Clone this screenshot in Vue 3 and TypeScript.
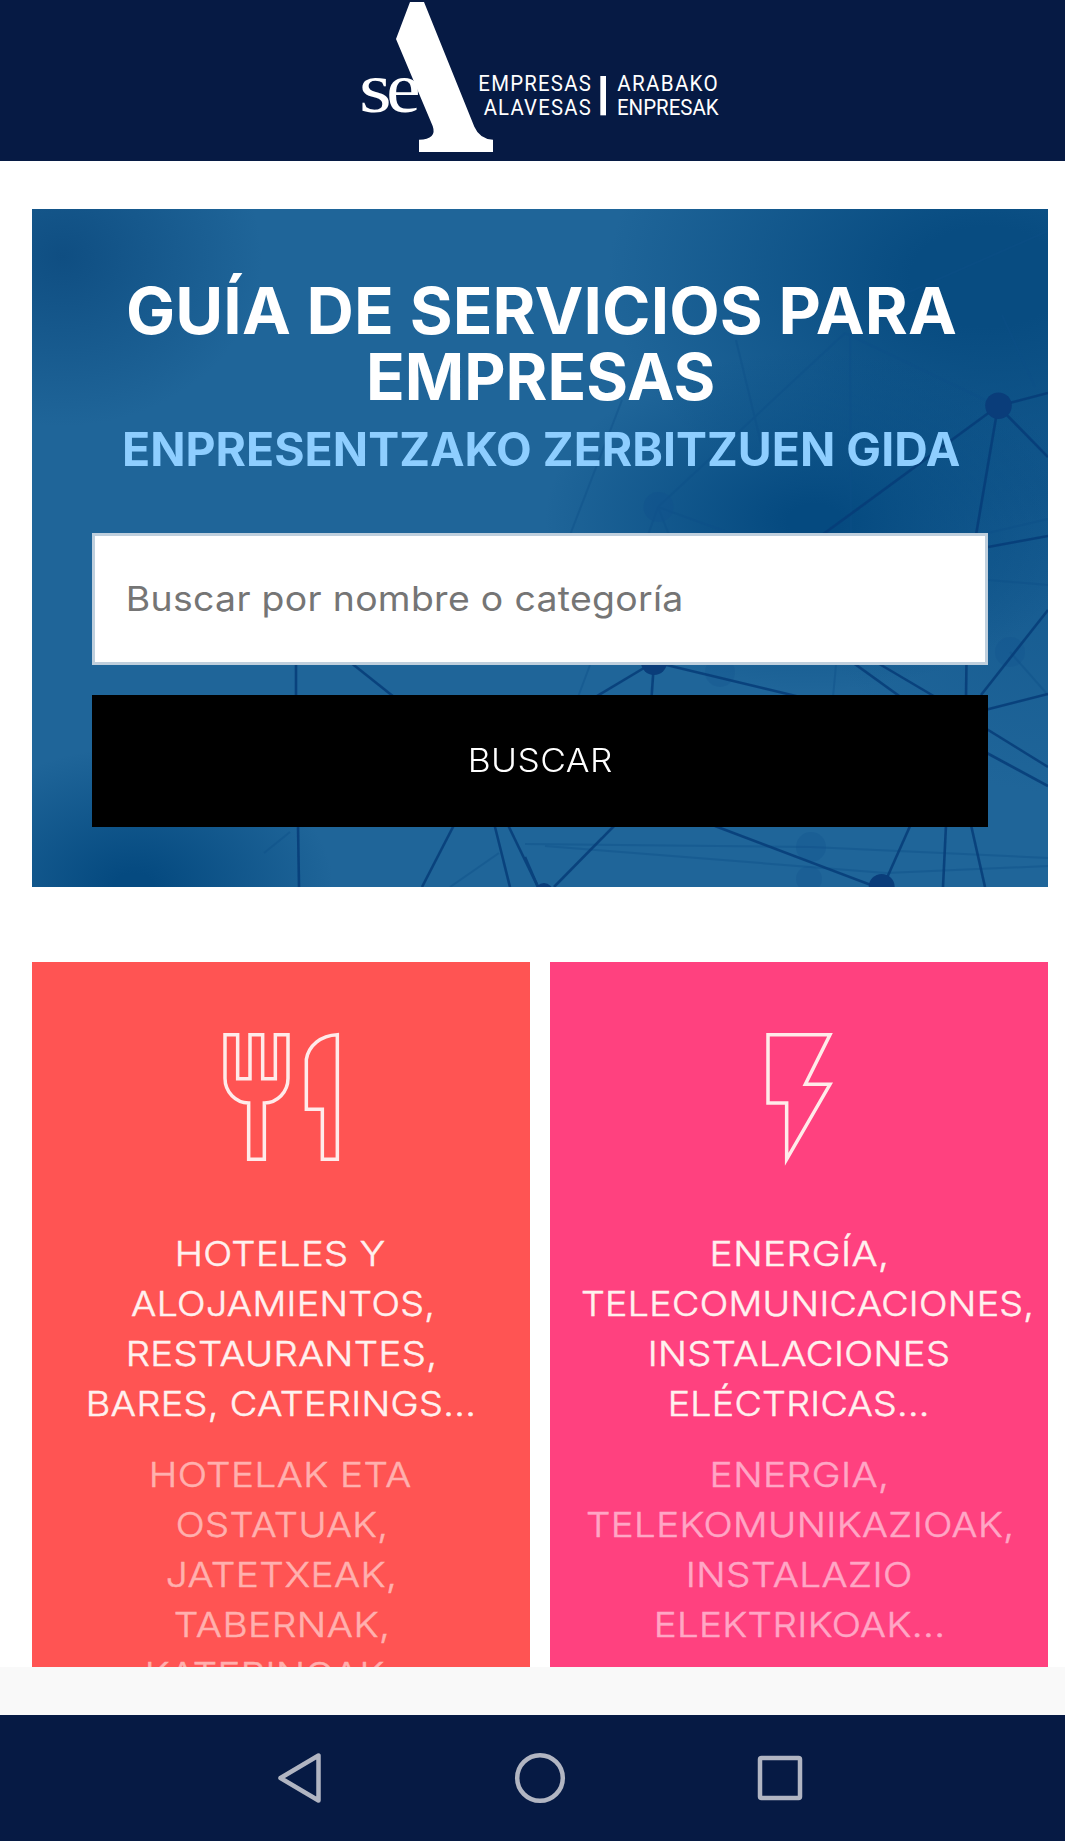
<script setup lang="ts">
interface Line {
  text: string
  width: number
}
interface Card {
  id: string
  spanish: Line[]
  basque: Line[]
}

const line = (text: string, width: number): Line => ({ text, width })

const title: Line[] = [line('GUÍA DE SERVICIOS PARA', 828), line('EMPRESAS', 343.5)]
const subtitle = line('ENPRESENTZAKO ZERBITZUEN GIDA', 835)
const placeholder = line('Buscar por nombre o categoría', 553)
const submit = line('BUSCAR', 141)

const cards: Card[] = [
  {
    id: 'food',
    spanish: [
      line('HOTELES Y', 206),
      line('ALOJAMIENTOS,', 301),
      line('RESTAURANTES,', 305),
      line('BARES, CATERINGS...', 384),
    ],
    basque: [
      line('HOTELAK ETA', 259),
      line('OSTATUAK,', 207),
      line('JATETXEAK,', 226),
      line('TABERNAK,', 212),
      line('KATERINGAK...', 267),
    ],
  },
  {
    id: 'energy',
    spanish: [
      line('ENERGÍA,', 173),
      line('TELECOMUNICACIONES,', 449),
      line('INSTALACIONES', 297),
      line('ELÉCTRICAS...', 255.5),
    ],
    basque: [
      line('ENERGIA,', 173),
      line('TELEKOMUNIKAZIOAK,', 424),
      line('INSTALAZIO', 221),
      line('ELEKTRIKOAK...', 285),
    ],
  },
]

// Widens a line of text to the given width, mostly through wider letters
// and for the rest through tracking.
const vFit = {
  mounted(el: HTMLElement, binding: { value: number }) {
    const text = (el.textContent ?? '').trim()
    const style = getComputedStyle(el)
    const ctx = document.createElement('canvas').getContext('2d')
    if (!ctx || text.length < 2) return
    ctx.font = `${style.fontWeight} ${style.fontSize} ${style.fontFamily}`
    const m = ctx.measureText(text)
    const ink = m.actualBoundingBoxLeft + m.actualBoundingBoxRight
    const scale = 1 + (binding.value / ink - 1) * 0.85
    const spacing = (binding.value / scale - ink) / (text.length - 1)
    el.style.letterSpacing = `${spacing}px`
    el.style.width = `${binding.value}px`
    el.style.transform = `scaleX(${scale}) translateX(${m.actualBoundingBoxLeft}px)`
  },
}

const strong: number[][] = [
  [998, 406, 1048, 393], [998, 406, 1048, 457], [998, 406, 976, 535], [998, 406, 822, 535],
  [988, 547, 1048, 536], [1048, 610, 981, 695], [966.5, 660, 966, 698], [1048, 694, 985, 710],
  [985, 728, 1048, 767], [985, 752, 1048, 786], [852, 662, 902, 698], [876, 662, 937, 698],
  [654, 662, 597, 696], [654, 662, 651.5, 698], [654, 662, 800, 697], [715, 826, 871, 885],
  [910.5, 825, 886, 880], [946, 825, 943, 887], [971, 825, 985, 887], [615, 825, 554, 887],
  [525, 857, 538, 887], [296, 660, 296, 698], [298, 825, 299, 887], [350, 662, 394, 697],
  [454, 825, 422, 887], [494.5, 825, 510, 887], [508, 825, 538, 887],
]
const faint: number[][] = [
  [845, 333, 658, 507], [845, 333, 998, 406], [850, 333, 851, 535], [1048, 231, 900, 296],
  [658, 507, 735, 535], [658, 507, 648, 535], [658, 507, 669, 535], [736, 340, 765, 460],
  [1002, 315, 1035, 387], [1048, 519, 988, 533], [988, 580, 1048, 585], [1010, 652, 1048, 695],
  [836, 665, 833, 697], [590, 665, 578, 697], [525, 844, 811, 847], [811, 847, 1048, 858],
  [545, 846, 886, 873], [886, 873, 1048, 866], [499, 853, 450, 887], [290, 832, 264, 853],
  [622, 400, 570, 535],
]
</script>

<template>
  <div class="page">
    <header class="top">
      <svg class="logo" viewBox="0 0 1200 483" fill="#fff">
        <text class="serif" y="337">
          <tspan x="57" textLength="98" lengthAdjust="spacingAndGlyphs">s</tspan><tspan x="139" textLength="103" lengthAdjust="spacingAndGlyphs">e</tspan>
        </text>
        <path d="M210 6H252L403 380Q419 417 459 419V456H237V419Q292 418 278 378L168 117Z" />
        <text x="415" y="274" class="din" textLength="341" lengthAdjust="spacingAndGlyphs">EMPRESAS</text>
        <text x="431" y="345" class="din" textLength="325" lengthAdjust="spacingAndGlyphs">ALAVESAS</text>
        <rect x="781" y="228" width="17" height="118" />
        <text x="832" y="274" class="din" textLength="305" lengthAdjust="spacingAndGlyphs">ARABAKO</text>
        <text x="831" y="345" class="din tight" textLength="305" lengthAdjust="spacingAndGlyphs">ENPRESAK</text>
      </svg>
    </header>

    <main class="content">
      <section class="hero">
        <svg class="network" viewBox="32 209 1016 678">
          <g stroke="#0d4f88" stroke-width="2" opacity="0.4">
            <line v-for="(l, i) in faint" :key="i" :x1="l[0]" :y1="l[1]" :x2="l[2]" :y2="l[3]" />
          </g>
          <g fill="#11528d" opacity="0.5">
            <circle cx="658.5" cy="507" r="15" />
            <circle cx="811" cy="847" r="15" opacity="0.6" />
            <circle cx="809" cy="879" r="13" opacity="0.5" />
            <circle cx="1010" cy="652" r="15" opacity="0.5" />
            <circle cx="720" cy="672" r="15" opacity="0.5" />
          </g>
          <g stroke="#073d78" stroke-width="2.6" opacity="0.85">
            <line v-for="(l, i) in strong" :key="i" :x1="l[0]" :y1="l[1]" :x2="l[2]" :y2="l[3]" />
          </g>
          <g fill="#0a3d7a">
            <circle cx="998.5" cy="405.7" r="13.3" />
            <circle cx="654" cy="662" r="13" />
            <circle cx="881.7" cy="887" r="13" />
            <circle cx="544" cy="892" r="9" />
          </g>
        </svg>
        <h1 class="title">
          <span v-for="l in title" :key="l.text" v-fit="l.width" class="line">{{ l.text }}</span>
        </h1>
        <h2 class="subtitle"><span v-fit="subtitle.width" class="line">{{ subtitle.text }}</span></h2>
        <div class="field"><span v-fit="placeholder.width" class="line">{{ placeholder.text }}</span></div>
        <button class="submit" type="button">
          <span v-fit="submit.width" class="line">{{ submit.text }}</span>
        </button>
      </section>

      <section class="cards">
        <article v-for="card in cards" :key="card.id" class="card" :class="card.id">
          <svg v-if="card.id === 'food'" class="icon" viewBox="0 0 510 510">
            <path d="M75 74H113V206H150V74H188V206H226V74H264V205C264 246 232 279 193 279V448H146V279C107 279 75 246 75 205Z" />
            <path d="M412 74V448H367V298H319V148C326 107 362 76 412 74Z" />
          </svg>
          <svg v-else class="icon" viewBox="-78 0 510 510">
            <path d="M84 74H270L196 223H270L140 448V279H84Z" />
          </svg>
          <p class="text">
            <span v-for="l in card.spanish" :key="l.text" v-fit="l.width" class="line">{{ l.text }}</span>
          </p>
          <p class="text dim">
            <span v-for="l in card.basque" :key="l.text" v-fit="l.width" class="line">{{ l.text }}</span>
          </p>
        </article>
      </section>
    </main>

    <div class="strip"></div>

    <nav class="nav">
      <svg viewBox="0 0 56 56"><path d="M8.5 28L46.5 5.5V50.5Z" /></svg>
      <svg viewBox="0 0 56 56"><circle cx="28" cy="28" r="22.8" /></svg>
      <svg viewBox="0 0 56 56"><rect x="8" y="8" width="40" height="40" rx="1.5" /></svg>
    </nav>
  </div>
</template>

<style>
body {
  margin: 0;
  background: #fff;
}
</style>

<style scoped>
.page {
  width: 1065px;
  height: 1841px;
  display: flex;
  flex-direction: column;
  overflow: hidden;
  font-family: Inter, 'Liberation Sans', sans-serif;
}
.top {
  height: 161px;
  flex: none;
  background: #061a44;
  display: flex;
  justify-content: center;
}
.logo {
  width: 400px;
  height: 161px;
  margin-left: 15px;
}
.serif {
  font: 218px 'Liberation Serif', serif;
}
.din {
  font: 65px Roboto, sans-serif;
  letter-spacing: 4px;
}
.tight {
  letter-spacing: 0;
}
.content {
  height: 1506px;
  flex: none;
  overflow: hidden;
  box-sizing: border-box;
  padding: 48px 17px 0 32px;
}
.hero {
  position: relative;
  height: 678px;
  box-sizing: border-box;
  padding: 69px 60px 60px;
  display: flex;
  flex-direction: column;
  background:
    radial-gradient(ellipse 200px 170px at 3% 7%, #0f4e82 0%, #0f4e8200 100%),
    radial-gradient(ellipse 200px 140px at 10% 100%, #054a80 10%, #054a8000 100%),
    radial-gradient(ellipse 270px 170px at 77% 46%, #054a80 10%, #054a8000 100%),
    radial-gradient(ellipse 380px 250px at 94% 10%, #084c81 20%, #084c8100 100%),
    radial-gradient(ellipse 260px 300px at 100% 42%, #0b4f8699 0%, #0b4f8600 100%),
    #1f6599;
}
.network {
  position: absolute;
  inset: 0;
  width: 100%;
  height: 100%;
}
.title,
.subtitle,
.field,
.submit,
.text {
  position: relative;
  margin: 0;
  display: flex;
  flex-direction: column;
  align-items: center;
}
.line {
  display: block;
  flex: none;
  white-space: nowrap;
  text-align: left;
  transform-origin: left center;
}
.title,
.subtitle {
  padding-left: 4px;
}
.title {
  font-size: 64px;
  line-height: 66px;
  font-weight: 700;
  color: #fff;
}
.subtitle {
  margin-top: 14px;
  font-size: 46px;
  line-height: 50px;
  font-weight: 700;
  color: #8eceff;
}
.field {
  margin-top: 59px;
  height: 132px;
  box-sizing: border-box;
  border: 3px solid #bfcfdd;
  background: #fff;
  color: #757575;
  font-size: 34px;
  line-height: 126px;
  align-items: flex-start;
  padding-left: 33px;
}
.submit {
  margin-top: 30px;
  height: 132px;
  border: 0;
  padding: 0 0 0 2px;
  background: #000;
  color: #fff;
  font-family: inherit;
  font-size: 32px;
  font-weight: 300;
  line-height: 132px;
}
.cards {
  margin-top: 75px;
  display: flex;
  gap: 20px;
}
.card {
  width: 498px;
  height: 760px;
  box-sizing: border-box;
  padding: 48px 32px 0;
}
.food {
  background: #ff5453;
}
.energy {
  background: #ff417f;
}
.icon {
  display: block;
  width: 170px;
  height: 170px;
  margin: 0 auto 49px 132px;
  fill: none;
  stroke: #ffebea;
  stroke-width: 10.5;
}
.text {
  font-size: 34.4px;
  line-height: 50px;
  font-weight: 300;
  -webkit-text-stroke: 0.5px currentColor;
  color: #fff1ef;
}
.food .icon {
  margin-left: 136px;
}
.dim {
  margin-top: 21px;
  color: #ffb0ae;
}
.energy .text {
  align-items: safe center;
}
.energy .dim {
  color: #ffa6c5;
}
.strip {
  height: 48px;
  flex: none;
  background: #f9f9f9;
}
.nav {
  flex: 1;
  background: #061a44;
  display: flex;
  justify-content: center;
  align-items: center;
  gap: 184px;
  padding-left: 15px;
}
.nav svg {
  width: 56px;
  height: 56px;
  fill: none;
  stroke: #b1b5c2;
  stroke-width: 4.5;
  stroke-linejoin: round;
}
</style>
